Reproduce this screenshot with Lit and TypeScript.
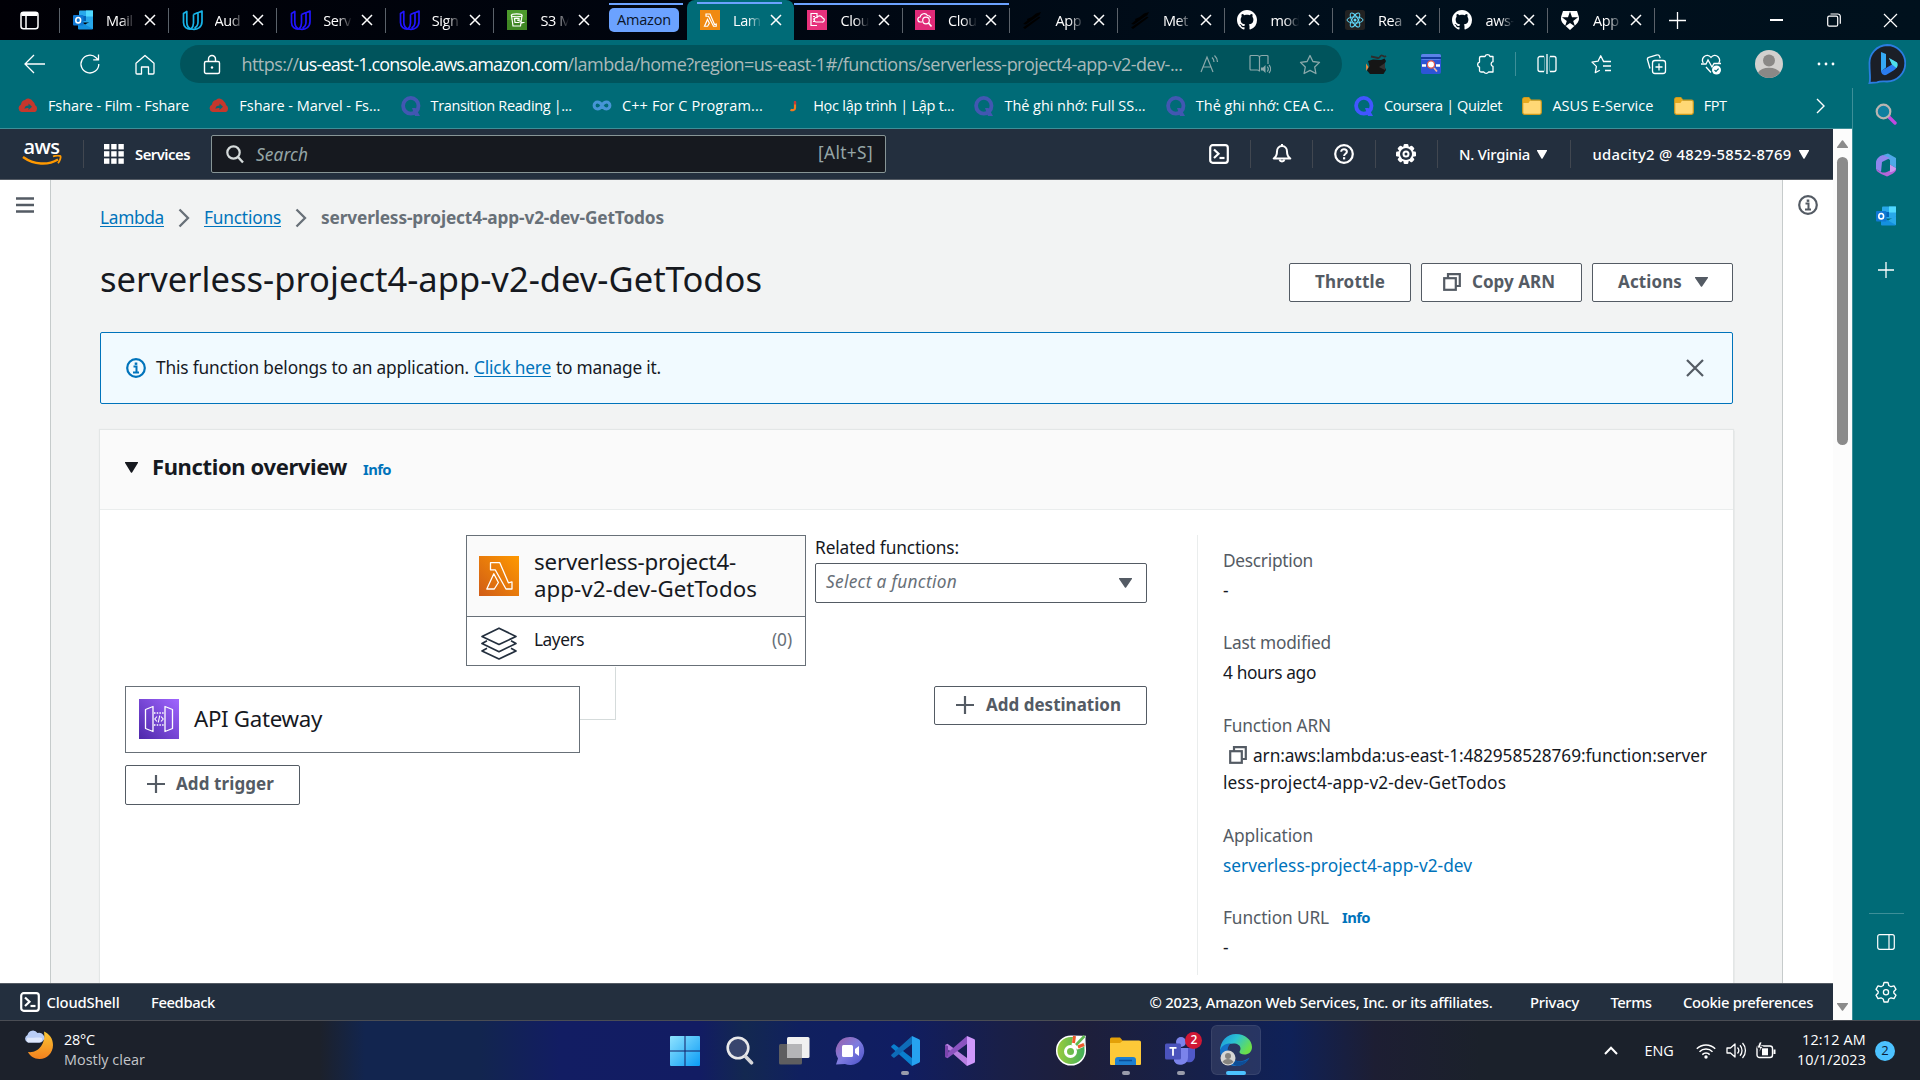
import { LitElement, html, css, svg, TemplateResult, SVGTemplateResult } from "lit";
import { customElement } from "lit/decorators.js";
import { classMap } from "lit/directives/class-map.js";

/** A run of text whose tracking is tuned so that it takes up exactly `w` pixels. */
@customElement("fit-text")
class FitText extends LitElement {
  static properties = { w: { type: Number } };
  declare w: number;
  static styles = css`
    :host { display: inline-block; white-space: nowrap; flex: none; }
  `;
  firstUpdated() {
    const run = this.renderRoot.querySelector("span")!;
    const n = (this.textContent || "").length;
    const natural = run.getBoundingClientRect().width;
    if (n && this.w) {
      this.style.letterSpacing = `${(this.w - natural) / n}px`;
      this.style.width = `${this.w}px`;
    }
  }
  render() {
    return html`<span><slot></slot></span>`;
  }
}

const t = (text: string, w: number, cls = "") => html`<fit-text class=${cls} .w=${w}>${text}</fit-text>`;

const icon = (w: number, h: number, body: SVGTemplateResult, vb = `0 0 ${w} ${h}`): TemplateResult =>
  html`<svg class="ico" width=${w} height=${h} viewBox=${vb} fill="none">${body}</svg>`;

/* ---------- favicons ---------- */
const outlook = icon(20, 20, svg`
  <rect x="6" y="0.5" width="14" height="12" rx="1" fill="#28a8ea"/>
  <rect x="13" y="0.5" width="7" height="6" fill="#50d9ff"/><rect x="6" y="6" width="7" height="5" fill="#0364b8"/>
  <path d="M5 10l8 5 7-5v8.5a1 1 0 0 1-1 1H6a1 1 0 0 1-1-1z" fill="#1490df"/><path d="M20 10v9L12 14.5z" fill="#28a8ea"/>
  <rect x="0" y="5" width="10.5" height="10.5" rx="1" fill="#0f78d4"/>
  <ellipse cx="5.2" cy="10.2" rx="2.4" ry="2.7" stroke="#fff" stroke-width="1.6"/>`);
const udacity = (c: string) => icon(21, 21, svg`
  <path d="M1.500 3.500L4.800 1.500V12c0 3.500 1.500 6 4.200 7C5 19.500 1.500 17 1.500 12.500z" stroke=${c} stroke-width="1.700" stroke-linejoin="round"/>
  <path d="M11.500 4.500v8.500c0 2.500-1 4.500-2.500 6 6.500 1.500 11-2 11-7.500V1l-4 1.800V12c0 2.500-1.200 4.800-3.500 6M11.500 4.500L15.500 2.700" stroke=${c} stroke-width="1.700" stroke-linejoin="round"/>`);
const s3 = icon(20, 20, svg`<rect width="20" height="20" fill="#3f8624"/><rect width="20" height="10" fill="#4c9a2c"/>
  <path d="M4.500 5.500l1.500 10.500h7.500l1.500-10.500M10 10l6.500 2.500-2.500.8M7.500 8.500h4.500v4H8z" stroke="#fff" stroke-width="1.200"/>
  <ellipse cx="9.700" cy="5.300" rx="5.400" ry="1.500" stroke="#fff" stroke-width="1.200"/>`);
const lambdaBody = svg`<defs><linearGradient id="lg" x1="0" y1="1" x2="1" y2="0"><stop offset="0" stop-color="#d05c17"/><stop offset="1" stop-color="#f90"/></linearGradient></defs>
  <rect width="40" height="40" fill="url(#lg)"/>
  <path d="M11.500 6.700h9.300L29.400 26.800l3.600-1v7.200h-6L16.200 13.800h-4.700zM14.800 17.800l4.600 8.700L15.300 33H7.800z" stroke="#fff" stroke-width="1.300" stroke-linejoin="round"/>`;
const lambdaFav = icon(20, 20, svg`<rect width="40" height="40" fill="#f08a12"/>
  <path d="M12 8h8l9 21 3.500-1v4.500H27L17 12.500h-5zM15 19l3.700 7.500-3.500 6H9z" stroke="#fff" stroke-width="2.400"/>`, "0 0 40 40");
const cloudFormation = icon(20, 20, svg`<rect width="20" height="20" fill="#e7317c"/>
  <path d="M10 15.500H4v-12h6v4M6 6.500h2M6 9h2M6 11.500h2M9 12h6a2 2 0 0 0 .5-4 3 3 0 0 0-5.500-.5A2.300 2.300 0 0 0 9 12z" stroke="#fff" stroke-width="1.200"/>`);
const cloudWatch = icon(20, 20, svg`<rect width="20" height="20" fill="#e02a78"/>
  <path d="M7 12H5.500a2.500 2.500 0 0 1-.3-5A4 4 0 0 1 12.500 5.500 3 3 0 0 1 15.500 8" stroke="#fff" stroke-width="1.200"/>
  <circle cx="11" cy="10.500" r="3.300" stroke="#fff" stroke-width="1.200"/><path d="M13.500 13l3 3.500" stroke="#fff" stroke-width="1.600"/>`);
const serverlessFav = icon(20, 20, svg`<path d="M1 14L14 3.500l5-1.500-1.500 3L4 14.500zM1 17.500L17 6.500l1.500 1L3 19zM5 9l12-5-11 8z" fill="#000"/>`);
const github = icon(20, 20, svg`<path fill="#fff" d="M8 0C3.580 0 0 3.580 0 8c0 3.540 2.290 6.530 5.470 7.590.4.070.55-.17.55-.38 0-.19-.01-.82-.01-1.490-2.010.37-2.530-.49-2.690-.94-.09-.23-.48-.94-.82-1.130-.28-.15-.68-.52-.01-.53.63-.01 1.080.58 1.230.82.72 1.210 1.870.87 2.330.66.07-.52.28-.87.51-1.070-1.780-.2-3.640-.89-3.640-3.950 0-.87.31-1.590.82-2.150-.08-.2-.36-1.020.08-2.120 0 0 .67-.21 2.200.82.64-.18 1.320-.27 2-.27s1.360.09 2 .27c1.530-1.040 2.200-.82 2.200-.82.44 1.100.16 1.920.08 2.120.51.56.82 1.270.82 2.150 0 3.070-1.870 3.750-3.650 3.950.29.25.54.73.54 1.480 0 1.070-.01 1.930-.01 2.200 0 .21.15.46.55.38A8.010 8.010 0 0 0 16 8c0-4.420-3.580-8-8-8z"/>`, "0 0 16 16");
const react = icon(20, 20, svg`<rect width="20" height="20" rx="2.500" fill="#222"/><g stroke="#61dafb" stroke-width="1">
  <ellipse cx="10" cy="10" rx="8" ry="3.100"/><ellipse cx="10" cy="10" rx="8" ry="3.100" transform="rotate(60 10 10)"/><ellipse cx="10" cy="10" rx="8" ry="3.100" transform="rotate(120 10 10)"/></g><circle cx="10" cy="10" r="1.500" fill="#61dafb"/>`);
const auth0 = icon(20, 20, svg`<path d="M3 1h14l1.800 5.500c.8 3-.3 6-2.800 7.900L10 20l-6-5.600C1.500 12.500.4 9.500 1.200 6.500z" fill="#fff"/>
  <path d="M10 1.500l2 5.800h6l-4.800 3.600 1.800 5.700L10 13l-5 3.600 1.800-5.700L2 7.300h6z" fill="#000d18"/>`);

/* ---------- browser glyphs ---------- */
const cross = (s: number, w: number, c = "#fff") => icon(s, s, svg`<path d=${`M1 1L${s - 1} ${s - 1}M${s - 1} 1L1 ${s - 1}`} stroke=${c} stroke-width=${w}/>`);
const plus = (s: number, w: number, c: string) => icon(s, s, svg`<path d=${`M${s / 2} 0V${s}M0 ${s / 2}H${s}`} stroke=${c} stroke-width=${w}/>`);
const workspace = icon(19, 19, svg`<rect x="1" y="1.200" width="17" height="16.600" rx="2.500" stroke="#fff" stroke-width="1.500"/><path d="M1.500 5V3.500a2 2 0 0 1 2-2h12a2 2 0 0 1 2 2V5z" fill="#fff"/><path d="M6 5v12.500" stroke="#fff" stroke-width="1.500"/>`);
const restore = icon(14, 14, svg`<rect x=".7" y="3.200" width="10" height="10" rx="1.500" stroke="#fff" stroke-width="1.200"/><path d="M3.500 1h7.300a2.500 2.500 0 0 1 2.500 2.500v7.200" stroke="#fff" stroke-width="1.200"/>`);
const S = "#fff";
const back = icon(22, 20, svg`<path d="M21 10H1.500M10 1L1 10l9 9" stroke=${S} stroke-width="1.300"/>`);
const reload = icon(22, 22, svg`<path d="M19.800 11a8.900 8.900 0 1 1-2.700-6.300L19 6.700M19.500 1.500v5.300h-5.300" stroke=${S} stroke-width="1.300"/>`);
const home = icon(20, 21, svg`<path d="M1 9.300L10 1.500l9 7.800V19a1 1 0 0 1-1 1h-4.500v-7h-7v7H2a1 1 0 0 1-1-1z" stroke=${S} stroke-width="1.300" stroke-linejoin="round"/>`);
const lock = icon(18, 21, svg`<rect x="1.500" y="7.500" width="15" height="12" rx="1.500" stroke=${S} stroke-width="1.400"/><path d="M5.500 7.500V5a3.500 3.500 0 0 1 7 0v2.500" stroke=${S} stroke-width="1.400"/><circle cx="9" cy="13.500" r="1.200" fill=${S}/>`);
const G = "#8ba9ab";
const readAloud = icon(20, 20, svg`<path d="M1 18L7 3l6 15M3 13h8" stroke=${G} stroke-width="1.200"/><path d="M12 3.500a6 6 0 0 1 2 4.500M14.500 1.500A9 9 0 0 1 17.500 8" stroke=${G} stroke-width="1.200"/>`);
const reader = icon(22, 21, svg`<path d="M19 10V2.500a1 1 0 0 0-1-1h-5c-1.500 0-2.500.8-2.500 2v14c0-1-1-1.500-2.500-1.500H2a1 1 0 0 1-1-1v-12.500a1 1 0 0 1 1-1h6c1.500 0 2.500.8 2.500 2" stroke=${G} stroke-width="1.200"/><path d="M12 13.500h2l2.500-2.500v8L14 16.500h-2z" fill=${G}/><path d="M18.300 12.500a4 4 0 0 1 0 5M20 11a6 6 0 0 1 0 8" stroke=${G} stroke-width="1.200"/>`);
const starPath = "M11 1.500l2.900 6 6.600.9-4.800 4.600 1.200 6.500L11 16.400l-5.900 3.100 1.200-6.500L1.500 8.400l6.600-.9z";
const star = icon(22, 21, svg`<path d=${starPath} stroke=${G} stroke-width="1.300" stroke-linejoin="round"/>`);
const hat = icon(22, 22, svg`<path d="M3 8l5-1.500 8 .5 3.500-1.500L21 8l-2 4 2 5-2.500 4H5l-3-3.500L4.500 13z" fill="#151515"/><path d="M6 3.500l7 1.500c2 .5 2-3 4-2.500s2 2 4 .5" stroke="#2d2d2d" stroke-width="1.800"/><path d="M1 10.500L3.500 14 1.200 18z" fill="#f08a3a"/><path d="M14 14l6-4v7z" fill="#333"/>`);
const jsonExt = icon(20, 20, svg`<rect width="20" height="20" rx="2" fill="#2d55d6"/><rect width="20" height="6" rx="2" fill="#5b82e8"/><rect y="3" width="20" height="2" fill="#123c9e"/><path d="M1 11.500h4M15 11.500h4" stroke="#fff" stroke-width="2.500"/><circle cx="10" cy="10.500" r="3.600" fill="#fff" stroke="#e8594a" stroke-width="1.300"/><path d="M13 14l3 3.500" stroke="#f3b2a4" stroke-width="1.800"/>`);
const puzzle = icon(20, 22, svg`<path d="M5 3.500h4a2.600 2.600 0 0 1 5 0h3v5.200a2.400 2.400 0 0 0 0 4.700V19h-4.500a2.600 2.600 0 0 1-4.600 0H5a1.500 1.500 0 0 1-1.500-1.500V14a2.600 2.600 0 0 1 0-5V5A1.500 1.500 0 0 1 5 3.500z" stroke=${S} stroke-width="1.300" stroke-linejoin="round"/>`);
const split = icon(20, 20, svg`<path d="M7 2.500H3a2 2 0 0 0-2 2v11a2 2 0 0 0 2 2h4M13 2.500h4a2 2 0 0 1 2 2v11a2 2 0 0 1-2 2h-4M10 0v20" stroke=${S} stroke-width="1.300"/><path d="M7.500 2.500v15M12.500 2.500v15" stroke="#6ba8ae" stroke-width=".8"/>`);
const favs = icon(21, 21, svg`<path d="M12.500 7.400L9.700 1.800 7 7.200l-6 .9 4.400 4.300L4.300 18.700l4.500-2.400" stroke=${S} stroke-width="1.300" stroke-linejoin="round"/><path d="M12 7.500h8M12 12h8M14 16.500h6" stroke=${S} stroke-width="1.300"/>`);
const collections = icon(21, 21, svg`<rect x="6.500" y="6.500" width="13" height="13" rx="2.500" stroke=${S} stroke-width="1.300"/><path d="M13 9.500v7M9.500 13h7" stroke=${S} stroke-width="1.300"/><path d="M4 14.500L1.500 5.800a2 2 0 0 1 1.300-2.500L11 1a2 2 0 0 1 2.500 1.300l.7 1.900" stroke=${S} stroke-width="1.300"/>`);
const heart = icon(21, 21, svg`<path d="M2.300 9A5 5 0 0 1 3 2.800c2-2 5-1.800 7 .6 2-2.400 5-2.600 7-.6a5 5 0 0 1 .8 6.200M5 13l5 5.500" stroke=${S} stroke-width="1.300"/><path d="M0 10h5l2-4 4 7 2-3.500h7" stroke=${S} stroke-width="1.300"/><circle cx="15.500" cy="16" r="4.500" fill="#fff"/><path d="M13.500 16l1.500 1.500 2.600-2.800" stroke="#006b77" stroke-width="1.200"/>`);
const avatar = icon(28, 28, svg`<circle cx="14" cy="14" r="14" fill="#d2d0ce"/><circle cx="14" cy="10.500" r="6" fill="#8a8886"/><path d="M3 22.500a12 8 0 0 1 22 0A14 14 0 0 1 14 28 14 14 0 0 1 3 22.500z" fill="#8a8886"/>`);
const dots = icon(18, 4, svg`<circle cx="2" cy="2" r="1.400" fill="#fff"/><circle cx="9" cy="2" r="1.400" fill="#fff"/><circle cx="16" cy="2" r="1.400" fill="#fff"/>`);
const bing = icon(38, 40, svg`<path d="M19 1a18 18 0 1 1 0 36.500c-4 0-7-.5-10 .8L1.500 39c1.300-4 0-9 0-19A18 18 0 0 1 19 1z" fill="#1b1f27" stroke="#2a7de0" stroke-width="1.800"/>
  <path d="M13 8l5 2v13.500l-5 4z" fill="#35a9f5"/><path d="M13 27l11-6.500-3-6.500 8 4.500c1.500 3-.5 6.500-3.500 8L18 31c-2.500.8-5-1.500-5-4z" fill="#2a7cf0"/><path d="M21 14l8 4.500c1 2 .6 4-.5 5.500L24 20.500z" fill="#4fe0e8"/>`);

/* ---------- bookmarks ---------- */
const fshare = icon(20, 15, svg`<path d="M3 6.500A5 5 0 0 1 7 2a5 5 0 0 1 8 1.500 5 5 0 0 1 2 3.500A4 4 0 0 1 17 14H3.500A4 4 0 0 1 3 6.500z" fill="#c5372c"/><path d="M6.500 11c0-2.500 1.500-3.500 4-3.500V5.500L14 8.700 10.500 12v-2c-2 0-3 0-4 1z" fill="#0c6570"/>`);
const quizlet = (c: string) => icon(20, 20, svg`<ellipse cx="9.800" cy="9.800" rx="7.700" ry="7.900" stroke=${c} stroke-width="3.800"/><path d="M11 12h3.500l4.500 8h-5z" fill=${c}/>`);
const coursera = icon(20, 11, svg`<path d="M10 5.500C8.800 3.300 7.500 2.100 5.500 2.100a3.400 3.400 0 0 0 0 6.800C7.500 8.900 9 7.400 10 5.500s2.500-3.400 4.500-3.400a3.400 3.400 0 0 1 0 6.800c-1.500 0-2.800-.8-3.800-2.300" stroke="#4695d6" stroke-width="3"/>`);
const jIcon = icon(20, 12, svg`<path d="M12 2v6c0 2.200-2.500 2.700-4.500 1.700" stroke="#f27a1e" stroke-width="2.200"/><path d="M12 1v3.500" stroke="#c23a3a" stroke-width="2.200"/>`);
const folder = icon(20, 18, svg`<path d="M.7 2.500A1.800 1.800 0 0 1 2.500.7h4.300l2 2.500h8.700a1.800 1.800 0 0 1 1.800 1.800v10.500a1.800 1.800 0 0 1-1.800 1.800h-15a1.800 1.800 0 0 1-1.800-1.800z" fill="#ffd875" stroke="#cf9a1c" stroke-width="1.200"/><path d="M1 6V2.500A1.500 1.500 0 0 1 2.500 1h4l1.700 2.200L6.500 6z" fill="#e6a91d"/>`);
const overflow = icon(9, 16, svg`<path d="M1 1l7 7-7 7" stroke="#fff" stroke-width="1.400"/>`);

/* ---------- console ---------- */
const appsGrid = icon(20, 20, svg`${[0, 7.2, 14.4].map((y) => [0, 7.2, 14.4].map((x) => svg`<rect x=${x} y=${y} width="5.400" height="5.400" fill="#fff"/>`))}`);
const magnifier = icon(18, 19, svg`<circle cx="7.500" cy="7.500" r="6.200" stroke="#d5dbdb" stroke-width="2.200"/><path d="M12 12l5 5.500" stroke="#d5dbdb" stroke-width="2.400"/>`);
const shell = icon(20, 20, svg`<rect x="1.200" y="1.200" width="17.600" height="17.600" rx="2.500" stroke="#fff" stroke-width="2.200"/><path d="M5 5.500l4.500 4.300L5 14" stroke="#fff" stroke-width="2.200"/><path d="M10.500 14h5" stroke="#fff" stroke-width="2.200"/>`);
const bell = icon(20, 20, svg`<path d="M10 2v0C7 2 5 4.500 5 7.500c0 3.500-1 5.500-3.300 7h16.600C16 13 15 11 15 7.500 15 4.500 13 2 10 2z" stroke="#fff" stroke-width="2" stroke-linejoin="round"/><path d="M10 0v2M7.500 15.500a2.600 2.600 0 0 0 5 0" stroke="#fff" stroke-width="2"/>`);
const help = icon(20, 20, svg`<circle cx="10" cy="10" r="8.800" stroke="#fff" stroke-width="2.200"/><path d="M7.200 7.800c0-3.700 5.700-3.400 5.700 0 0 2-2.800 2-2.800 4.200" stroke="#fff" stroke-width="2"/><rect x="9" y="13.200" width="2.200" height="2.200" fill="#fff"/>`);
const cog = icon(20, 20, svg`${[0, 45, 90, 135].map((a) => svg`<rect x="7.600" y="0" width="4.800" height="20" rx="1.200" fill="#fff" transform=${`rotate(${a} 10 10)`}/>`)}<circle cx="10" cy="10" r="7.900" fill="#fff"/><circle cx="10" cy="10" r="6" fill="#232f3e"/><circle cx="10" cy="10" r="2.500" stroke="#fff" stroke-width="2"/>`);
const caret = (w: number, h: number, c: string) => icon(w, h, svg`<path d=${`M.5 0h${w - 1}a.5.5 0 0 1 .4.900L${w / 2 + 0.6} ${h - 0.5}a.8.8 0 0 1-1.200 0L.1.900A.5.5 0 0 1 .5 0z`} fill=${c}/>`);
const smile = icon(40, 11, svg`<path d="M1 2c11 8 25 8.500 35 2.500" stroke="#f90" stroke-width="2.500"/><path d="M31 1.500c3-1.200 7-1 7.500-.2.500 1-.5 4.500-2.500 7" stroke="#f90" stroke-width="1.800"/>`);
const burger = icon(18, 16, svg`<path d="M0 1.500h18M0 8h18M0 14.500h18" stroke="#545b64" stroke-width="2.400"/>`);
const infoI = (c: string) => icon(20, 20, svg`<circle cx="10" cy="10" r="8.800" stroke=${c} stroke-width="2.200"/><path d="M7.500 8.500h3V15M7 14.500h6" stroke=${c} stroke-width="2"/><rect x="8.700" y="4.500" width="2.600" height="2.400" fill=${c}/>`);
const chevron = icon(12, 20, svg`<path d="M1.500 1.500l8.500 8.500-8.500 8.500" stroke="#687078" stroke-width="2.300"/>`);
const copy = icon(18, 18, svg`<rect x="1.200" y="5.200" width="11.600" height="11.600" stroke="#545b64" stroke-width="2.200"/><path d="M5 5V1.200h11.800V13H13" stroke="#545b64" stroke-width="2.200"/>`);
const lambda = icon(40, 40, lambdaBody);
const layers = icon(36, 33, svg`<path d="M18 1.200L35 9.500 18 17.500 1 9.500z" stroke="#232f3e" stroke-width="1.700" stroke-linejoin="round"/><path d="M6 13.800l-5 2.700 17 8.200 17-8.200-5-2.700M6 21.200l-5 2.700L18 32l17-8.100-5-2.700" stroke="#232f3e" stroke-width="1.700" stroke-linejoin="round"/>`);
const gateway = icon(40, 40, svg`<defs><linearGradient id="gg" x1="0" y1="1" x2="1" y2="0"><stop offset="0" stop-color="#4d27aa"/><stop offset="1" stop-color="#a166ff"/></linearGradient></defs>
  <rect width="40" height="40" fill="url(#gg)"/><path d="M6.500 10.500l7.500-3v25l-7.500-3zM33.500 10.500l-7.500-3v25l7.500-3z" stroke="#fff" stroke-width="1.300" stroke-linejoin="round"/>
  <path d="M15 14h10.500M15 26h10.500" stroke="#fff" stroke-width="1.300" stroke-dasharray="1.500 1.200"/><path d="M18 17.500L15.800 20l2.200 2.500M22 17.500l2.200 2.500-2.200 2.500M20.700 16.500l-1.400 7" stroke="#fff" stroke-width="1.100"/>`);

/* ---------- edge sidebar ---------- */
const sideSearch = icon(22, 22, svg`<path d="M14 14l6 6" stroke="#c04ae0" stroke-width="3.400" stroke-linecap="round"/><circle cx="8.500" cy="8.500" r="6.800" fill="#0f7fa0" stroke="#b9b4b0" stroke-width="2.200"/>`);
const m365 = icon(22, 24, svg`<path d="M8 2l5-1.500 8 4.500v10l-6-3.500V7z" fill="#4fa8e8"/><path d="M8 2C4 3 1 6 1 10v6l5 3 1-10 8-4z" fill="#8f86ee"/><path d="M1 16l5 3c3 1.500 6 0 9-1.500l6-2.500v2c0 2-6 5.500-9 6.500C8 22 1 19 1 16z" fill="#b565d8"/><path d="M15 11.500l6 3.500c0 2-3 4-6 4z" fill="#c99af0"/><path d="M8.500 9l6.500-2v9l-4.500 1.500-3.500-2.500z" fill="#006b77"/>`);
const panelIcon = icon(18, 16, svg`<rect x=".7" y=".7" width="16.600" height="14.600" rx="2" stroke="#fff" stroke-width="1.200"/><path d="M12 1v14" stroke="#fff" stroke-width="1.200"/>`);
const sideGear = icon(22, 22, svg`<path d="M9 1.500h4l.8 3 2.200 1.200 3-.8 2 3.400L18.800 10.500v1.500L21 14.200l-2 3.400-3-.8-2.200 1.200-.8 3H9l-.8-3L6 16.800l-3 .8-2-3.400L3.200 12v-1.500L1 8.300l2-3.400 3 .8 2.200-1.200z" stroke="#fff" stroke-width="1.300" stroke-linejoin="round"/><circle cx="11" cy="11.200" r="2.600" stroke="#fff" stroke-width="1.300"/>`);

/* ---------- taskbar ---------- */
const moon = icon(30, 30, svg`<defs><linearGradient id="mg" x1="0" y1="0" x2="0" y2="1"><stop offset="0" stop-color="#fbc733"/><stop offset="1" stop-color="#f2801e"/></linearGradient></defs>
  <path d="M20 1.500c5.500 2.500 9 7 9 13.500 0 8-6 14-13.500 14C10 29 6 26 4 22c10 1.500 18-8 16-20.500z" fill="url(#mg)"/>
  <path d="M4 12.500a4 4 0 0 1-.5-7.500 5.500 5.500 0 0 1 10-2A5 5 0 0 1 17 12.500z" fill="#b9cdf5"/><path d="M4 12.500a3 3 0 0 1 0-5c3 1 8-1 14 .5a4 4 0 0 1-2.500 4.500z" fill="#dfe8fb"/>`);
const windows = icon(30, 30, svg`<defs><linearGradient id="wg" x1="0" y1="0" x2="1" y2="1"><stop offset="0" stop-color="#8fe3ff"/><stop offset="1" stop-color="#0a9bf5"/></linearGradient></defs><path d="M0 1a1 1 0 0 1 1-1h13.500v14.500H0zM15.500 0H29a1 1 0 0 1 1 1v13.500H15.500zM0 15.500h14.500V30H1a1 1 0 0 1-1-1zM15.500 15.500H30V29a1 1 0 0 1-1 1H15.500z" fill="url(#wg)"/>`);
const tSearch = icon(28, 29, svg`<circle cx="12" cy="12" r="10.300" fill="#38456e" stroke="#e8e8ea" stroke-width="2.600"/><path d="M19.500 20.500l6 6.300" stroke="#d5d6da" stroke-width="3.600" stroke-linecap="round"/>`);
const taskView = icon(31, 28, svg`<rect y="7" width="23" height="20.500" rx="1.500" fill="#5e5e60"/><rect x="8" y="0" width="22.500" height="21" rx="1.500" fill="#f0f0f0"/><path d="M8 7h15v14H9.500A1.500 1.500 0 0 1 8 19.500z" fill="#b5b5b7"/>`);
const chat = icon(30, 30, svg`<defs><linearGradient id="cg" x1="0" y1="0" x2="1" y2="1"><stop offset="0" stop-color="#9d5fa5"/><stop offset=".5" stop-color="#7e7ce0"/><stop offset="1" stop-color="#4a50c8"/></linearGradient></defs><path d="M15 1a14 14 0 1 1-5 27L1 28.500l2-6A14 14 0 0 1 15 1z" fill="url(#cg)"/><rect x="7" y="9" width="11" height="12" rx="1.500" fill="#fff"/><path d="M20 13l4-3v10l-4-3z" fill="#fff"/>`);
const vscode = icon(30, 30, svg`<path d="M22 0v30L1.500 11.500a1 1 0 0 1 0-1.500l1.700-1.500a1.200 1.200 0 0 1 1.500 0L22 22z" fill="#0a7fce"/><path d="M22 0L1.500 18.500a1 1 0 0 0 0 1.500l1.700 1.500a1.200 1.200 0 0 0 1.500 0L22 8z" fill="#0e6cb8"/><path d="M22 0l7 3.200a1.500 1.500 0 0 1 1 1.300v21a1.500 1.500 0 0 1-1 1.300L22 30z" fill="#26a2f0"/>`);
const vs = icon(30, 30, svg`<path d="M0 9l2.500-1.200L22 22v8L3.500 13.800 3 21 0 20z" fill="#b77fe0"/><path d="M0 21l2.500 1.200L22 8V0L3.500 16z" fill="#8b53c0"/><path d="M22 0l7 3a1.500 1.500 0 0 1 1 1.400v21.200a1.500 1.500 0 0 1-1 1.400l-7 3z" fill="#cf98fb"/><path d="M0 9l3 1v10l-3 1z" fill="#7a44ad"/>`);
const coccoc = icon(32, 31, svg`<defs><linearGradient id="cc" x1="0" y1="0" x2="1" y2="0"><stop offset="0" stop-color="#9ccc3c"/><stop offset="1" stop-color="#3fae5a"/></linearGradient></defs>
  <path d="M16 1.200c5 0 9 0 14 .3-.8 3 .3 9 .3 14A14.300 14.300 0 1 1 16 1.200z" fill="url(#cc)" stroke="#fff" stroke-width="1.500"/><path d="M16.500 10L18 2h11.500l-1 10-6 2.500z" fill="#fff"/><circle cx="15.500" cy="16.500" r="5" stroke="#fff" stroke-width="3"/><path d="M18.500 8l1-7M23 12l6-2.500" stroke="#f0592a" stroke-width="3"/><path d="M21 10l8.500-9" stroke="#5fba50" stroke-width="2.600"/>`);
const explorer = icon(31, 28, svg`<path d="M0 2a1.500 1.500 0 0 1 1.500-1.500h8.500l3 3.500h16a2 2 0 0 1 2 2V10H0z" fill="#e3a008"/><path d="M0 6h10l3-2.500h16a2 2 0 0 1 2 2V27a1 1 0 0 1-1 1H1a1 1 0 0 1-1-1z" fill="#fdc938"/><path d="M5 28v-5a3 3 0 0 1 3-3h15a3 3 0 0 1 3 3v5z" fill="#1d7fd0"/><path d="M9 23.500h13" stroke="#0b4f9a" stroke-width="1.500"/>`);
const teams = icon(32, 30, svg`<circle cx="16" cy="6" r="5" fill="#7b83eb"/><circle cx="26" cy="7.500" r="3.500" fill="#5059c9"/><path d="M17 12h13v8a6 6 0 0 1-8 6z" fill="#5059c9"/><path d="M9 12h14v9a7.500 7.500 0 0 1-14 4z" fill="#7b83eb"/><rect y="7.500" width="16" height="16" rx="1.500" fill="#4b53bc"/><path d="M4.500 11.800h7M8 11.800v8" stroke="#fff" stroke-width="1.800"/>`);
const edge = icon(32, 32, svg`<defs><linearGradient id="eg" x1="0" y1="0" x2="1" y2=".5"><stop offset="0" stop-color="#1a8fe0"/><stop offset=".5" stop-color="#2bc3d2"/><stop offset="1" stop-color="#6be04a"/></linearGradient></defs>
  <path d="M16 0c9 0 16 6 16 13 0 5-3.500 7.500-7.500 7.500-3 0-5-1-5-2.500 0-1 1-1.500 1-3.500 0-3-3-5-7-5C7 9.500 1.500 13 0 17 0 7 7 0 16 0z" fill="url(#eg)"/><path d="M0 17c1-5 5-7.500 10.500-7.500C8 12 7 15 8 19c1.500 6 8 9 14 8 3-.6 5.500-2 7.500-3.500C27 28.500 22 32 16 32 7 32 0 25.500 0 17z" fill="#1471c9"/><path d="M10 13c-3 8 3 15 12 14.500 3-.3 5.500-1.500 7.500-3.500C27 28.500 22 32 17 32 9 30 5 20 10 13z" fill="#0d4d96"/>
  <circle cx="8" cy="24" r="7.500" fill="#d8d6d4"/><circle cx="8" cy="22" r="3" fill="#86837f"/><path d="M2.500 28a6 5 0 0 1 11 0 7.500 7.500 0 0 1-11 0z" fill="#86837f"/>`);
const upArrow = icon(14, 9, svg`<path d="M1 8l6-6.300L13 8" stroke="#fff" stroke-width="2"/>`);
const wifi = icon(20, 16, svg`<path d="M.8 5.800a13 13 0 0 1 18.400 0M3.500 8.800a9.200 9.200 0 0 1 13 0M6.300 11.600a5.200 5.200 0 0 1 7.400 0" stroke="#fff" stroke-width="1.500"/><circle cx="10" cy="14" r="1.700" fill="#fff"/>`);
const sound = icon(21, 17, svg`<path d="M1 6h3.500L9 2v13l-4.500-4H1z" stroke="#fff" stroke-width="1.300" stroke-linejoin="round"/><path d="M11.500 5.500a4.500 4.500 0 0 1 0 6M14 3.200a8 8 0 0 1 0 10.600M16.500 1a11 11 0 0 1 0 15" stroke="#fff" stroke-width="1.300"/>`);
const battery = icon(20, 17, svg`<rect x="1" y="4" width="15.500" height="11.500" rx="2.500" stroke="#fff" stroke-width="1.400"/><rect x="6" y="6.300" width="6" height="7" fill="#fff"/><path d="M18.500 7.500v4.500" stroke="#fff" stroke-width="2"/><path d="M3.500 0L1 6h3L2.500 11 7 4.500H4.500L6 0z" fill="#fff" stroke="#1c212b" stroke-width=".8"/>`);

interface Tab { icon: TemplateResult; title: string; grouped?: boolean; active?: boolean }
const leadTabs: Tab[] = [
  { icon: outlook, title: "Mail" },
  { icon: udacity("#17b4e8"), title: "Aud" },
  { icon: udacity("#2015ff"), title: "Serv" },
  { icon: udacity("#2015ff"), title: "Sign" },
  { icon: s3, title: "S3 M" },
];
const restTabs: Tab[] = [
  { icon: lambdaFav, title: "Lam", active: true },
  { icon: cloudFormation, title: "Clou", grouped: true },
  { icon: cloudWatch, title: "Clou", grouped: true },
  { icon: serverlessFav, title: "App" },
  { icon: serverlessFav, title: "Met" },
  { icon: github, title: "mod" },
  { icon: react, title: "Rea" },
  { icon: github, title: "aws-" },
  { icon: auth0, title: "App" },
];
const bookmarks: [TemplateResult, string, number][] = [
  [fshare, "Fshare - Film - Fshare", 141],
  [fshare, "Fshare - Marvel - Fs...", 141],
  [quizlet("#4257b2"), "Transition Reading |...", 141],
  [coursera, "C++ For C Program...", 141],
  [jIcon, "Học lập trình | Lập t...", 141],
  [quizlet("#4257b2"), "Thẻ ghi nhớ: Full SS...", 141],
  [quizlet("#4257b2"), "Thẻ ghi nhớ: CEA C...", 138],
  [quizlet("#4255ff"), "Coursera | Quizlet", 118],
  [folder, "ASUS E-Service", 101],
  [folder, "FPT", 23],
];

@customElement("app-root")
class AppRoot extends LitElement {
  static styles = css`
    :host { display: block; width: 1920px; height: 1080px; overflow: hidden; font-family: "Noto Sans", "Open Sans", sans-serif; font-size: 17.300px; color: #16191f; --teal: #006b77; --line: #3d8f98; }
    * { box-sizing: border-box; }
    .ico { display: block; flex: none; }
    .screen { display: flex; flex-direction: column; width: 1920px; height: 1080px; }
    .row { display: flex; align-items: center; }
    .cell { display: flex; align-items: center; justify-content: center; flex: none; }

    /* tab strip */
    .tabs { height: 40px; display: flex; background: linear-gradient(90deg, #000006, #00050f 35%, #000f1c 70%, #00111d); color: #fff; font-family: "Open Sans", sans-serif; font-size: 14.5px; flex: none; }
    .ws { width: 59px; height: 40px; }
    .tab { display: flex; align-items: center; width: 108.600px; height: 40px; padding-left: 14px; position: relative; flex: none; }
    .tab.rest { width: 107.500px; padding-left: 13px; }
    .tab.lead::before, .tab.sep::before { content: ""; position: absolute; left: 0; top: 8px; width: 1px; height: 25px; background: #5b626a; }
    .tab .fav { width: 20px; }
    .tab .title { width: 29px; margin-left: 13px; white-space: nowrap; letter-spacing: -0.4px; -webkit-mask-image: linear-gradient(90deg, #000 50%, transparent); mask-image: linear-gradient(90deg, #000 50%, transparent); }
    .tab .x { margin-left: 8.500px; }
    .tab.active { background: var(--teal); border-radius: 8px 8px 0 0; }
    .tab.active::after { content: ""; position: absolute; left: 10px; right: 12px; top: 2px; height: 2px; background: #6ba2ff; }
    .tab.grouped::after { content: ""; position: absolute; left: 0; right: 0; top: 3px; height: 2px; background: #6ba2ff; }
    .group { width: 85px; padding: 8px 8px 0 7px; position: relative; flex: none; }
    .group::before { content: ""; position: absolute; left: 7px; right: 4px; top: 3px; height: 2px; background: #6ba2ff; }
    .group .chip { height: 24px; border-radius: 5px; background: #6ba2ff; color: #0a1428; line-height: 23px; text-align: center; }
    .newtab { width: 45px; border-left: 1px solid #5b626a; height: 25px; align-self: center; }
    .win { width: 57px; height: 40px; }
    .wins { display: flex; margin-left: auto; padding-right: 1px; }
    .min { width: 13px; height: 1.500px; background: #fff; }

    /* toolbar */
    .browser { display: flex; flex: none; height: 980px; background: var(--teal); position: relative; }
    .pane { width: 1852px; display: flex; flex-direction: column; }
    .toolbar { height: 48px; width: 1920px; display: flex; align-items: center; padding-left: 7px; flex: none; }
    .tb { width: 55px; height: 48px; }
    .tb.wide { width: 59px; }
    .url { width: 1162px; height: 38px; margin-left: 8px; background: #00545c; border-radius: 19px; padding-left: 23px; color: #aab9ba; font-family: "Open Sans", sans-serif; font-size: 18px; }
    .url .lk { width: 18px; margin-right: 20.500px; }
    .url fit-text { margin-top: -1px; }
    .url .host { color: #fff; }
    .url .grp { margin-left: auto; display: flex; padding-right: 7px; }
    .url .grp .cell { width: 50px; }
    .exts { margin-left: 6.500px; }
    .tsep { width: 1px; height: 24px; background: var(--line); margin: 0 3px 0 2px; }
    .bing { width: 67px; }
    .marks { width: 1852px; padding: 0 0 5px 18px; display: flex; align-items: center; color: #fff; font-family: "Open Sans", sans-serif; font-size: 14.500px; border-bottom: 1px solid var(--line); height: 41px; flex: none; }
    .mark { display: flex; align-items: center; gap: 10px; margin-right: 20.300px; }
    .mark .bi { width: 20px; }
    .more { margin-left: auto; margin-right: 27px; }

    /* edge sidebar */
    .side { width: 68px; margin-top: 48px; display: flex; flex-direction: column; align-items: center; border-left: 1px solid var(--line); padding-right: 1px; }
    .side .cell { width: 66px; height: 51px; }
    .side .add { height: 57px; }
    .side .bot { margin-top: auto; width: 66px; display: flex; flex-direction: column; align-items: center; padding-bottom: 3px; }
    .side .bot .cell { height: 50px; }
    .side .bot i { width: 35px; height: 1px; background: var(--line); margin-bottom: 3px; }

    /* console */
    .view { display: flex; width: 1852px; height: 891px; }
    .console { width: 1833px; display: flex; flex-direction: column; background: #fff; }
    .sbar { width: 19px; background: #fcfcfc; display: flex; flex-direction: column; align-items: center; padding-top: 11px; }
    .sbar .up { transform: rotate(180deg); }
    .sbar .thumb { width: 11px; height: 288px; border-radius: 6px; background: #8b8b8b; margin-top: 9px; }
    .sbar .down { margin-top: auto; margin-bottom: 9px; }
    .nav { height: 51px; background: #232f3e; border-bottom: 1px solid #545b64; display: flex; align-items: center; color: #fff; font-size: 14.800px; font-weight: 500; flex: none; }
    .brand { width: 83px; display: flex; flex-direction: column; align-items: center; }
    .brand b { font: 600 20px/17px "Open Sans", sans-serif; height: 17px; display: block; margin-top: -4px; }
    .brand .sm { margin-top: 0; margin-left: 1px; }
    .nsep { width: 1px; height: 28px; background: #414750; flex: none; }
    .services { margin-left: 20px; gap: 11px; font-weight: 600; }
    .search { width: 675px; height: 38px; margin-left: 21px; border: 1px solid #879596; border-radius: 2px; background: #16191f; padding: 0 12px 0 13.500px; font-weight: 400; color: #95a5a6; font-size: 17.300px; }
    .search em { margin-left: 12.500px; flex: 1; }
    .search fit-text { margin-top: -3px; }
    .nav .ib { width: 61.300px; }
    .tools { margin-left: auto; }
    .region { padding: 0 22.500px 0 21px; gap: 7px; }
    .acct { padding: 0 24px 0 22px; gap: 7.500px; }
    .stage { display: flex; height: 803px; overflow: hidden; flex: none; }
    .lrail { width: 51px; border-right: 1px solid #c6cbcb; padding: 17px 0 0 16px; background: #fff; }
    .rrail { width: 51px; border-left: 1px solid #c6cbcb; padding: 15px 0 0 15px; background: #fff; margin-left: auto; }
    .main { width: 1731px; background: #f2f3f3; padding: 24px 49px 0 49px; }
    .crumbs { display: flex; align-items: center; height: 28px; color: #687078; }
    .crumbs fit-text { line-height: 24px; margin-top: -2px; }
    .crumbs .ico { margin: 0 14px 0 14px; }
    a { color: #0073bb; }
    a.u fit-text { text-decoration: underline; text-underline-offset: 2px; text-decoration-thickness: 1px; }
    .head { display: flex; align-items: center; height: 39px; margin-top: 31px; gap: 10px; }
    .head h1 { margin: -8px auto 0 0; font-weight: 400; font-size: 34.500px; line-height: 40px; }
    .btn { display: flex; align-items: center; border: 1px solid #545b64; border-radius: 2px; background: #fff; color: #545b64; font-weight: 700; height: 39px; font-size: 17px; line-height: 37px; padding: 0 25px 2px; flex: none; }
    .copybtn { padding: 0 26px 2px 21px; gap: 11px; }
    .actbtn { padding: 0 24px 2px 25px; gap: 13px; }
    .btn .ico { margin-top: 1px; }
    .flash { margin-top: 30px; height: 72px; background: #f1faff; border: 1px solid #0073bb; border-radius: 2px; display: flex; align-items: center; padding: 0 28px 0 25px; }
    .flash .msg { margin: -2px 0 0 10px; display: flex; flex: 1; gap: 5px; }
    .card { margin-top: 26px; width: 1633px; background: #fff; box-shadow: 0 0 1px 1px #e3e6e6, 1px 1px 1px #b9c0c0; height: 700px; }
    .cardhead { height: 80px; background: #fafafa; border-bottom: 1px solid #eaeded; display: flex; align-items: center; padding: 0 25px 4px; }
    .cardhead h2 { margin: -4px 16px 0 14px; font-size: 22px; font-weight: 700; line-height: 30px; }
    .info { font-size: 14.800px; font-weight: 700; }
    .cardhead .info { margin-top: 2px; }
    .cardbody { display: flex; padding: 25px 0 0 25px; }
    .diagram { width: 1022px; position: relative; }
    .top { display: flex; padding-left: 341px; gap: 9px; height: 151px; align-items: flex-start; }
    .fn { width: 340px; height: 131px; border: 1px solid #687078; background: #fff; }
    .fnhead { height: 81px; background: #fafafa; border-bottom: 1px solid #687078; display: flex; align-items: center; padding: 0 0 0 12px; gap: 15px; font-size: 22.300px; line-height: 27px; }
    .fnname { display: flex; flex-direction: column; padding-bottom: 2px; }
    .layers { display: flex; align-items: flex-start; padding: 10px 13px 0 14px; }
    .layers .ico { margin-right: 17px; }
    .layers .n { margin-left: auto; color: #687078; }
    .layers fit-text { line-height: 24px; margin-top: 1px; }
    .related { width: 332px; }
    .related .lab { height: 28px; line-height: 25px; }
    .select { height: 40px; border: 1px solid #545b64; border-radius: 2px; display: flex; align-items: center; justify-content: space-between; padding: 0 14px 0 10px; color: #687078; font-style: italic; }
    .select fit-text { margin-top: -4px; }
    .bottom { display: flex; justify-content: space-between; align-items: flex-start; }
    .api { width: 455px; height: 67px; border: 1px solid #687078; display: flex; align-items: center; padding-left: 13px; gap: 15px; font-size: 22.300px; }
    .api fit-text { margin-top: -3px; }
    .api .ico { margin-top: -1px; }
    .wire { position: absolute; left: 455px; top: 132px; width: 36px; height: 53px; border: solid #d5dbdb; border-width: 0 1px 1px 0; }
    .trig { margin-top: 12px; width: 175px; height: 40px; padding: 0 0 3px 21px; gap: 11px; }
    .dest { width: 213px; padding: 0 0 2px 21px; gap: 12px; }
    .details { margin-left: 50px; width: 510px; height: 440px; border-left: 1px solid #eaeded; padding: 11.500px 0 0 25px; display: flex; flex-direction: column; gap: 25px; line-height: 27.500px; }
    .kv { display: flex; flex-direction: column; align-items: flex-start; gap: 2.500px; }
    .kv > div { height: 27.500px; display: flex; align-items: center; }
    .kv .k { color: #545b64; gap: 13px; }
    .kv .val2 { margin-top: -2.500px; }
    .kv .arn { padding-left: 6px; gap: 6px; }
    .foot { height: 37px; background: #232f3e; border-top: 1px solid #545b64; display: flex; align-items: center; padding: 0 20px; color: #fff; font-size: 14.800px; font-weight: 500; flex: none; }
    .foot .cs { gap: 6.500px; width: 131px; }
    .foot .legal { margin-left: auto; display: flex; gap: 31.500px; }
    .foot .legal .c { margin-right: 6px; }

    /* taskbar */
    .task { height: 60px; border-top: 1px solid #4a4d54; display: flex; align-items: center; color: #fff; font-family: "Open Sans", sans-serif; font-size: 14.400px; line-height: 20px; padding-left: 24px; flex: none;
      background: linear-gradient(90deg, #1c212b 0, #1c212b 320px, #12254f 365px, #12254f 480px, #121d63 560px, #121c63 700px, #132850 745px, #10205f 800px, #101d62 900px, #191f48 1000px, #1e1f3a 1080px, #16204a 1200px, #0f2158 1290px, #1d1e33 1375px, #1b212b 1480px); }
    .wx { width: 633px; display: flex; gap: 10px; padding-bottom: 2px; }
    .wx .cond { color: #c4c6ca; }
    .apps { display: flex; }
    .app { width: 55.100px; height: 59px; position: relative; }
    .app.gap { margin-left: 55.500px; }
    .app .on { position: absolute; bottom: 5px; left: 24px; width: 8px; height: 4px; border-radius: 2px; background: #9a9cab; }
    .app.cur .tile { width: 50px; height: 50px; border-radius: 6px; background: #ffffff18; border: 1px solid #ffffff12; margin-bottom: 1px; }
    .app.cur .on { left: 18px; width: 20px; background: #4cc2ff; }
    .badge { position: absolute; right: 6px; top: 11px; width: 17px; height: 17px; border-radius: 9px; background: #d01735; font: 600 12px/16px "Open Sans", sans-serif; text-align: center; }
    .tray { margin-left: auto; padding-right: 25px; }
    .tray .eng { margin: 0 22.500px 0 26.500px; }
    .net { display: flex; align-items: center; gap: 9.500px; }
    .tray .clock { display: flex; flex-direction: column; align-items: flex-end; margin: 0 9px 0 20px; width: 70px; padding-bottom: 2px; }
    .count { width: 20px; height: 20px; border-radius: 10px; background: #4cc2ff; color: #0b2138; font-size: 13px; line-height: 19px; text-align: center; }
  `;

  private tab(x: Tab, lead: boolean, i: number) {
    const cls = { tab: true, lead, rest: !lead, sep: !lead && i > 1, active: !!x.active, grouped: !!x.grouped };
    return html`<div class=${classMap(cls)}>
      <span class="fav">${x.icon}</span><span class="title">${x.title}</span><span class="x">${cross(12, 1.5)}</span>
    </div>`;
  }

  private chrome() {
    return html`<div class="tabs">
      <div class="cell ws">${workspace}</div>
      ${leadTabs.map((x, i) => this.tab(x, true, i))}
      <div class="group"><div class="chip">${t("Amazon", 54)}</div></div>
      ${restTabs.map((x, i) => this.tab(x, false, i))}
      <div class="cell newtab">${plus(17, 1.3, "#fff")}</div>
      <div class="wins">
        <div class="cell win"><div class="min"></div></div>
        <div class="cell win">${restore}</div>
        <div class="cell win">${cross(15, 1.2)}</div>
      </div>
    </div>`;
  }

  private toolbar() {
    return html`<div class="toolbar">
      <div class="cell tb">${back}</div><div class="cell tb">${reload}</div><div class="cell tb">${home}</div>
      <div class="url row">
        <span class="lk">${lock}</span>
        ${t("https://", 57)}${t("us-east-1.console.aws.amazon.com", 269, "host")}${t("/lambda/home?region=us-east-1#/functions/serverless-project4-app-v2-dev-...", 615)}
        <div class="grp"><div class="cell">${readAloud}</div><div class="cell">${reader}</div><div class="cell">${star}</div></div>
      </div>
      <div class="row exts">
        <div class="cell tb">${hat}</div><div class="cell tb">${jsonExt}</div><div class="cell tb">${puzzle}</div>
        <div class="tsep"></div>
        <div class="cell tb">${split}</div><div class="cell tb">${favs}</div><div class="cell tb">${collections}</div>
        <div class="cell tb">${heart}</div><div class="cell tb wide">${avatar}</div><div class="cell tb">${dots}</div>
        <div class="cell bing">${bing}</div>
      </div>
    </div>`;
  }

  private nav() {
    return html`<div class="nav">
      <div class="brand"><b>${t("aws", 36)}</b><span class="sm">${smile}</span></div>
      <div class="nsep"></div>
      <div class="row services">${appsGrid}${t("Services", 55)}</div>
      <div class="row search">${magnifier}<em>${t("Search", 52)}</em>${t("[Alt+S]", 55)}</div>
      <div class="row tools">
        <div class="cell ib">${shell}</div><div class="nsep"></div>
        <div class="cell ib">${bell}</div><div class="nsep"></div>
        <div class="cell ib">${help}</div><div class="nsep"></div>
        <div class="cell ib">${cog}</div><div class="nsep"></div>
        <div class="row region">${t("N. Virginia", 71)}${caret(10, 9, "#fff")}</div><div class="nsep"></div>
        <div class="row acct">${t("udacity2 @ 4829-5852-8769", 199)}${caret(10, 9, "#fff")}</div>
      </div>
    </div>`;
  }

  private diagram() {
    return html`<div class="diagram">
      <div class="top">
        <div class="fn">
          <div class="fnhead">${lambda}<div class="fnname">${t("serverless-project4-", 202)}${t("app-v2-dev-GetTodos", 223)}</div></div>
          <div class="layers">${layers}${t("Layers", 50)}${t("(0)", 20, "n")}</div>
        </div>
        <div class="related">
          <div class="lab">${t("Related functions:", 144)}</div>
          <div class="select">${t("Select a function", 131)}${caret(13, 10, "#545b64")}</div>
        </div>
      </div>
      <div class="bottom">
        <div>
          <div class="api">${gateway}${t("API Gateway", 128)}</div>
          <div class="btn trig">${plus(18, 2.2, "#545b64")}${t("Add trigger", 98)}</div>
        </div>
        <div class="btn dest">${plus(18, 2.2, "#545b64")}${t("Add destination", 135)}</div>
      </div>
      <div class="wire"></div>
    </div>`;
  }

  private details() {
    return html`<div class="details">
      <div class="kv"><div class="k">${t("Description", 90)}</div><div>-</div></div>
      <div class="kv"><div class="k">${t("Last modified", 108)}</div><div>${t("4 hours ago", 93)}</div></div>
      <div class="kv"><div class="k">${t("Function ARN", 108)}</div>
        <div class="arn">${copy}${t("arn:aws:lambda:us-east-1:482958528769:function:server", 454)}</div>
        <div class="val2">${t("less-project4-app-v2-dev-GetTodos", 283)}</div></div>
      <div class="kv"><div class="k">${t("Application", 90)}</div><div><a>${t("serverless-project4-app-v2-dev", 249)}</a></div></div>
      <div class="kv"><div class="k">${t("Function URL", 106)}<a class="info">${t("Info", 28)}</a></div><div>-</div></div>
    </div>`;
  }

  private console() {
    return html`<div class="console">
      ${this.nav()}
      <div class="stage">
        <div class="lrail">${burger}</div>
        <div class="main">
          <div class="crumbs"><a class="u">${t("Lambda", 64)}</a>${chevron}<a class="u">${t("Functions", 77)}</a>${chevron}<b>${t("serverless-project4-app-v2-dev-GetTodos", 343)}</b></div>
          <div class="head">
            <h1>${t("serverless-project4-app-v2-dev-GetTodos", 662)}</h1>
            <div class="btn">${t("Throttle", 70)}</div>
            <div class="btn copybtn">${copy}${t("Copy ARN", 83)}</div>
            <div class="btn actbtn">${t("Actions", 64)}${caret(13, 10, "#545b64")}</div>
          </div>
          <div class="flash">${infoI("#0073bb")}
            <div class="msg">${t("This function belongs to an application.", 313)}<a class="u">${t("Click here", 77)}</a>${t("to manage it.", 105)}</div>
            ${cross(18, 2.2, "#545b64")}
          </div>
          <div class="card">
            <div class="cardhead">${caret(13, 11, "#16191f")}<h2>${t("Function overview", 195)}</h2><a class="info">${t("Info", 28)}</a></div>
            <div class="cardbody">${this.diagram()}${this.details()}</div>
          </div>
        </div>
        <div class="rrail">${infoI("#545b64")}</div>
      </div>
      <div class="foot">
        <div class="row cs">${shell}${t("CloudShell", 73)}</div>${t("Feedback", 64)}
        <div class="legal">
          ${t("© 2023, Amazon Web Services, Inc. or its affiliates.", 343, "c")}
          ${t("Privacy", 49)}${t("Terms", 41)}${t("Cookie preferences", 130)}
        </div>
      </div>
    </div>`;
  }

  private app(g: TemplateResult, on = false, gap = false) {
    return html`<div class=${classMap({ cell: true, app: true, gap })}>${g}${on ? html`<span class="on"></span>` : ""}</div>`;
  }

  render() {
    return html`<div class="screen">
      ${this.chrome()}
      <div class="browser">
        <div class="pane">
          ${this.toolbar()}
          <div class="marks">
            ${bookmarks.map(([i, s, w]) => html`<div class="mark"><span class="bi">${i}</span>${t(s, w)}</div>`)}
            <span class="more">${overflow}</span>
          </div>
          <div class="view">
            ${this.console()}
            <div class="sbar"><span class="up">${caret(11, 8, "#8b8b8b")}</span><div class="thumb"></div><span class="down">${caret(11, 8, "#8b8b8b")}</span></div>
          </div>
        </div>
        <div class="side">
          <div class="cell">${sideSearch}</div><div class="cell">${m365}</div><div class="cell">${outlook}</div>
          <div class="cell add">${plus(16, 1.3, "#fff")}</div>
          <div class="bot"><i></i><div class="cell">${panelIcon}</div><div class="cell">${sideGear}</div></div>
        </div>
      </div>
      <div class="task">
        <div class="wx">${moon}<div>${t("28°C", 31)}<br>${t("Mostly clear", 81, "cond")}</div></div>
        <div class="apps">
          ${this.app(windows)}${this.app(tSearch)}${this.app(taskView)}${this.app(chat)}${this.app(vscode, true)}${this.app(vs)}
          ${this.app(coccoc, false, true)}${this.app(explorer, true)}
          <div class="cell app">${teams}<span class="badge">2</span><span class="on"></span></div>
          <div class="cell app cur"><div class="cell tile">${edge}</div><span class="on"></span></div>
        </div>
        <div class="row tray">
          ${upArrow}${t("ENG", 29, "eng")}
          <div class="net">${wifi}${sound}${battery}</div>
          <div class="clock">${t("12:12 AM", 64)}${t("10/1/2023", 69)}</div>
          <div class="count">2</div>
        </div>
      </div>
    </div>`;
  }
}
